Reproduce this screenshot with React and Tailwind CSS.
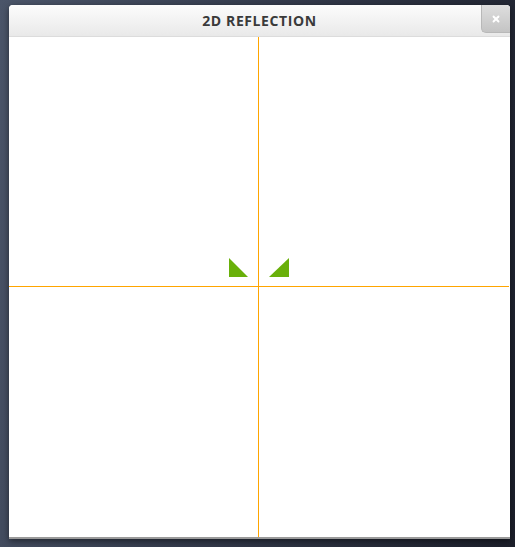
import React from "react";
import { X } from "lucide-react";

const Canvas = () => (
  <svg width="500" height="500" viewBox="0 0 500 500" className="block">
    <line x1="0" y1="249.5" x2="500" y2="249.5" stroke="#ffa500" strokeWidth="1" />
    <line x1="249.5" y1="0" x2="249.5" y2="500" stroke="#ffa500" strokeWidth="1" />
    <polygon points="220,221 220,240 239,240" fill="#69b00a" />
    <polygon points="280,221 280,240 260,240" fill="#69b00a" />
  </svg>
);

export default function App() {
  return (
    <div className="w-[515px] h-[547px] overflow-hidden bg-[linear-gradient(100deg,#4b5569_0%,#343b4c_45%,#1c1f2b_100%)] pt-[5px] pl-[9px]">
      <div className="w-[501px] bg-white rounded-t-[4px] shadow-[0_2px_6px_rgba(0,0,0,0.5)]">
        {/* title bar */}
        <div className="relative h-[32px] flex items-center justify-center rounded-t-[4px] bg-[linear-gradient(#fcfcfc,#e9e9e9)] border-b border-[#dcdcdc]">
          <span className="font-['Open_Sans',sans-serif] font-bold text-[14px] tracking-[0.6px] text-[#3a3a3a]">
            2D REFLECTION
          </span>
          <button className="absolute right-0 top-0 w-[29px] h-[28px] flex items-center justify-center rounded-tr-[4px] rounded-bl-[5px] bg-[linear-gradient(#dedede,#c4c4c4)] border-l border-b border-[#b8b8b8]">
            <X className="size-[10px] text-white" strokeWidth={4.5} />
          </button>
        </div>
        <div className="border-b-2 border-[#9a9a9a]">
          <Canvas />
        </div>
      </div>
    </div>
  );
}
